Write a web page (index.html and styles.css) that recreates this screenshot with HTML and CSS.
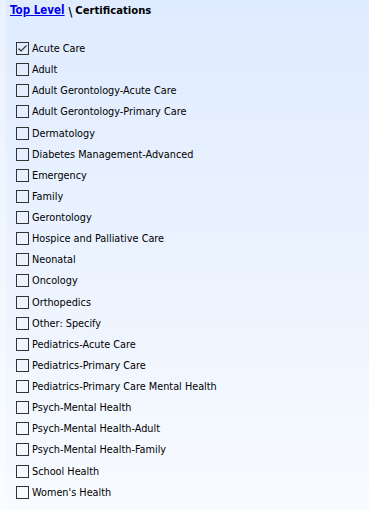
FILE: index.html
```html
<!DOCTYPE html>
<html>
<head>
<meta charset="utf-8">
<link rel="stylesheet" href="styles.css">
</head>
<body>
<div class="page">
  <div class="crumbs"><a href="#" class="crumb-link">Top Level</a><span class="sep">\</span><span class="crumb-current">Certifications</span></div>
  <ul class="list">
    <li class="item"><span class="box checked"><svg viewBox="0 0 13 13" width="13" height="13"><path d="M2.5 6.5 L5 9 L10.5 3.5" fill="none" stroke="#333" stroke-width="1.2"/></svg></span><span class="label">Acute Care</span></li>
    <li class="item"><span class="box"></span><span class="label">Adult</span></li>
    <li class="item"><span class="box"></span><span class="label">Adult Gerontology-Acute Care</span></li>
    <li class="item"><span class="box"></span><span class="label">Adult Gerontology-Primary Care</span></li>
    <li class="item"><span class="box"></span><span class="label">Dermatology</span></li>
    <li class="item"><span class="box"></span><span class="label">Diabetes Management-Advanced</span></li>
    <li class="item"><span class="box"></span><span class="label">Emergency</span></li>
    <li class="item"><span class="box"></span><span class="label">Family</span></li>
    <li class="item"><span class="box"></span><span class="label">Gerontology</span></li>
    <li class="item"><span class="box"></span><span class="label">Hospice and Palliative Care</span></li>
    <li class="item"><span class="box"></span><span class="label">Neonatal</span></li>
    <li class="item"><span class="box"></span><span class="label">Oncology</span></li>
    <li class="item"><span class="box"></span><span class="label">Orthopedics</span></li>
    <li class="item"><span class="box"></span><span class="label">Other: Specify</span></li>
    <li class="item"><span class="box"></span><span class="label">Pediatrics-Acute Care</span></li>
    <li class="item"><span class="box"></span><span class="label">Pediatrics-Primary Care</span></li>
    <li class="item"><span class="box"></span><span class="label">Pediatrics-Primary Care Mental Health</span></li>
    <li class="item"><span class="box"></span><span class="label">Psych-Mental Health</span></li>
    <li class="item"><span class="box"></span><span class="label">Psych-Mental Health-Adult</span></li>
    <li class="item"><span class="box"></span><span class="label">Psych-Mental Health-Family</span></li>
    <li class="item"><span class="box"></span><span class="label">School Health</span></li>
    <li class="item"><span class="box"></span><span class="label">Women's Health</span></li>
  </ul>
</div>
</body>
</html>
```

FILE: styles.css
```css
html, body {
  margin: 0;
  padding: 0;
}
body {
  width: 369px;
  height: 510px;
  overflow: hidden;
  font-family: "DejaVu Sans Condensed", "DejaVu Sans", sans-serif;
  font-stretch: condensed;
  background: linear-gradient(to bottom, #dfebff 0%, #eaf2ff 45%, #f8fbff 100%);
}
.page {
  height: 510px;
  border-left: 6px solid rgba(255,255,255,0.35);
  box-sizing: border-box;
}
.crumbs {
  margin-left: 4px;
  padding-top: 3px;
  font-size: 11.5px;
  font-weight: bold;
  line-height: 14px;
  height: 21px;
}
.crumb-link {
  color: #0000ee;
  text-decoration: underline;
}
.sep {
  color: #000;
  margin: 0 3px 0 4px;
  position: relative;
  top: 2px;
}
.crumb-current {
  color: #000;
  font-size: 11.2px;
}
.list {
  list-style: none;
  margin: 14px 0 0 10px;
  padding: 0;
}
.item {
  display: flex;
  align-items: center;
  height: 21.14px;
}
.box {
  width: 11px;
  height: 11px;
  border: 1px solid #333;
  background: transparent;
  display: inline-block;
  flex: none;
  position: relative;
}
.box svg {
  position: absolute;
  left: -1px;
  top: -1px;
}
.label {
  margin-left: 3px;
  font-size: 10.8px;
  color: #000;
}
```
